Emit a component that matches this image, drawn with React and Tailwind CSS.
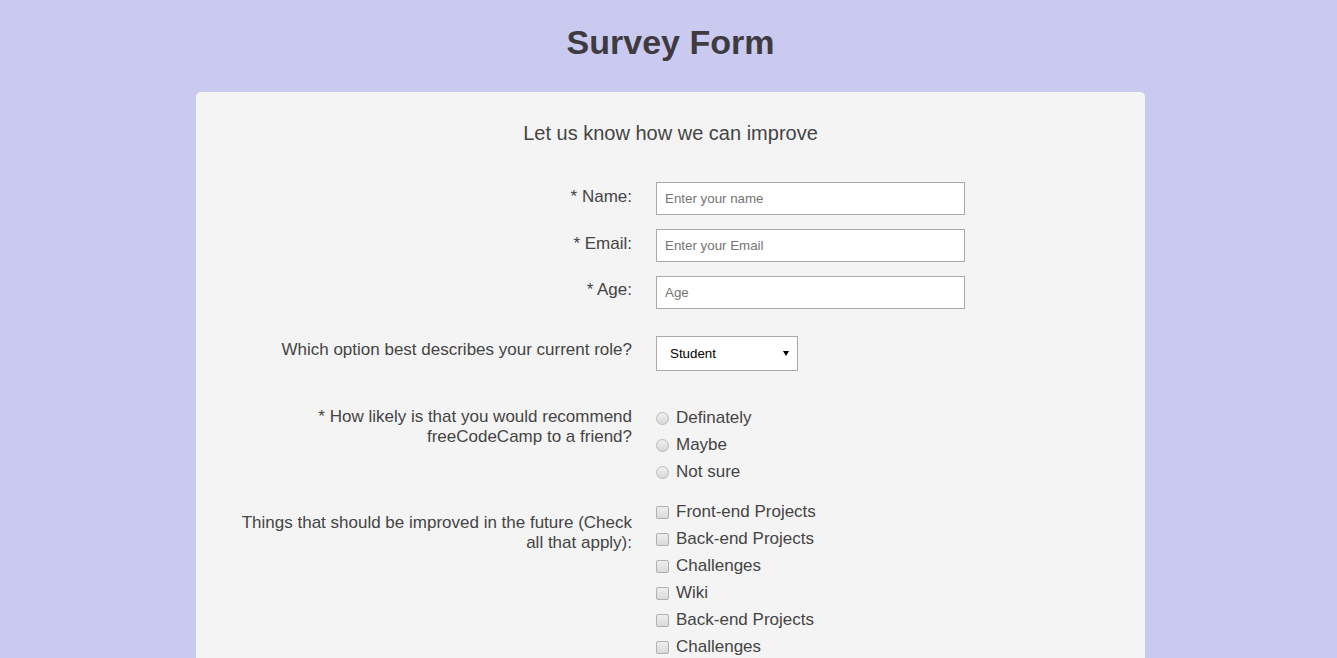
import { useState } from 'react';

const radioOptions = ['Definately', 'Maybe', 'Not sure'];
const improveOptions = ['Front-end Projects', 'Back-end Projects', 'Challenges', 'Wiki', 'Back-end Projects', 'Challenges'];

const Radio = ({ label }) => (
    <label className="flex items-center h-[20px] cursor-pointer">
        <span className="w-[13px] h-[13px] rounded-full border border-[#b9b9b9] bg-gradient-to-b from-[#f0f0f0] to-[#d8d8d8]" />
        <span className="ml-[7px]">{label}</span>
    </label>
);

const Checkbox = ({ label }) => (
    <label className="flex items-center h-[20px] cursor-pointer">
        <span className="w-[13px] h-[13px] rounded-[2px] border border-[#b0b0b0] bg-gradient-to-b from-[#eeeeee] to-[#dadada]" />
        <span className="ml-[7px]">{label}</span>
    </label>
);

const App = () => {
    const [role, setRole] = useState('student');

    return (
        <div className="min-h-screen bg-[#cac9f0] pl-1 font-['Liberation_Sans',Arial,sans-serif] text-[#444]">
            <h1 className="pt-[25px] text-center text-[34px] font-bold leading-none text-[#3e3b40]">Survey Form</h1>

            <div className="mx-auto mt-[33px] w-[949px] rounded-[5px] bg-[#f4f4f4] pt-[29px] pb-[40px]">
                <p className="text-center text-[20px] leading-[24px]">Let us know how we can improve</p>

                <form className="mt-[37px] grid grid-cols-[400px_1fr] gap-x-[24px] pl-[36px] text-[17px] leading-[20px]">
                    <label className="pt-[5px] text-right">* Name:</label>
                    <input
                        type="text"
                        placeholder="Enter your name"
                        className="w-[309px] h-[33px] border border-[#a9a9a9] bg-white px-[8px] text-[13.333px] placeholder:text-[#757575] outline-none"
                    />

                    <label className="mt-[14px] pt-[5px] text-right">* Email:</label>
                    <input
                        type="email"
                        placeholder="Enter your Email"
                        className="mt-[14px] w-[309px] h-[33px] border border-[#a9a9a9] bg-white px-[8px] text-[13.333px] placeholder:text-[#757575] outline-none"
                    />

                    <label className="mt-[14px] pt-[4px] text-right">* Age:</label>
                    <input
                        type="number"
                        placeholder="Age"
                        className="mt-[14px] w-[309px] h-[33px] border border-[#a9a9a9] bg-white px-[8px] text-[13.333px] placeholder:text-[#757575] outline-none"
                    />

                    <label className="mt-[27px] pt-[4px] text-right">Which option best describes your current role?</label>
                    <div className="mt-[27px] relative w-[142px] h-[35px]">
                        <select
                            value={role}
                            onChange={(e) => setRole(e.target.value)}
                            className="w-full h-full appearance-none border border-[#a9a9a9] bg-white pl-[13px] text-[13.333px] text-black outline-none"
                        >
                            <option value="student">Student</option>
                            <option value="job">Full Time Job</option>
                            <option value="learner">Full Time Learner</option>
                            <option value="other">Other</option>
                        </select>
                        <span className="pointer-events-none absolute right-[9px] top-[15px] border-l-[3px] border-r-[3px] border-t-[5px] border-l-transparent border-r-transparent border-t-black" />
                    </div>

                    <label className="mt-[36px] text-right">* How likely is that you would recommend freeCodeCamp to a friend?</label>
                    <div className="mt-[37px] flex flex-col gap-[7px]">
                        {radioOptions.map((opt) => (
                            <Radio key={opt} label={opt} />
                        ))}
                    </div>

                    <label className="mt-[20px] pt-[11px] text-right">Things that should be improved in the future (Check all that apply):</label>
                    <div className="mt-[20px] flex flex-col gap-[7px]">
                        {improveOptions.map((opt, i) => (
                            <Checkbox key={i} label={opt} />
                        ))}
                    </div>
                </form>
            </div>
        </div>
    );
};

export default App;
